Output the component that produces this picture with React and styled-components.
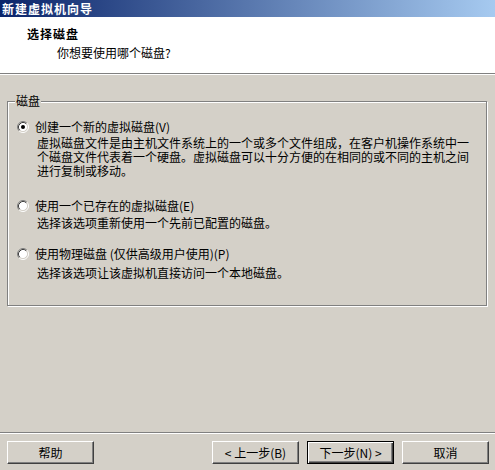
import React from "react";
import styled, { createGlobalStyle } from "styled-components";

const Global = createGlobalStyle`
  html, body { margin: 0; padding: 0; background: #d4d0c8; }
  body { font-family: "Noto Sans CJK SC", "Liberation Sans", sans-serif; font-size: 12px; color: #000; }
`;

const Window = styled.div`
  width: 495px;
  height: 470px;
  display: flex;
  flex-direction: column;
  background: #d4d0c8;
  overflow: hidden;
`;

const TitleBar = styled.div`
  height: 17px;
  flex: none;
  display: flex;
  align-items: center;
  padding-left: 2px;
  background: linear-gradient(to right, #0a246a, #a6caf0);
  color: #fff;
  font-weight: bold;
  font-size: 12px;
  line-height: 17px;
  letter-spacing: 1px;
`;

const Header = styled.div`
  height: 56px;
  flex: none;
  background: #fff;
  box-sizing: border-box;
  padding-top: 10px;
  display: flex;
  flex-direction: column;
`;

const HeaderTitle = styled.div`
  font-weight: bold;
  line-height: 13px;
  padding-left: 27px;
  letter-spacing: 1px;
`;

const HeaderSub = styled.div`
  line-height: 13px;
  margin-top: 6px;
  padding-left: 57px;
`;

const Separator = styled.div`
  flex: none;
  height: 0;
  border-top: 1px solid #808080;
  border-bottom: 1px solid #fff;
`;

const Body = styled.div`
  flex: 1;
  padding: 26px 8px 0 7px;
`;

const Group = styled.div`
  position: relative;
  height: 205px;
  box-sizing: border-box;
  border: 1px solid #808080;
  box-shadow: inset 1px 1px 0 #fff, 1px 1px 0 #fff;
  padding: 18px 0 0 9px;
`;

const Legend = styled.span`
  position: absolute;
  top: -8px;
  left: 7px;
  padding: 0 1px;
  background: #d4d0c8;
  line-height: 14px;
`;

const Option = styled.div`
  margin-top: ${(p) => p.$gap}px;
`;

const RadioRow = styled.label`
  display: flex;
  align-items: center;
  gap: 6px;
  line-height: 14px;
  white-space: nowrap;
`;

const Desc = styled.div`
  padding-left: 20px;
  margin-top: ${(p) => p.$gap}px;
  line-height: 14px;
  white-space: nowrap;
`;

const Footer = styled.div`
  flex: none;
  border-top: 1px solid #808080;
  box-shadow: inset 0 1px 0 #fff;
  padding: 8px 6px 6px 7px;
  display: flex;
  align-items: center;
`;

const Spacer = styled.div`
  flex: 1;
`;

const Button = styled.button`
  width: ${(p) => p.$w || 87}px;
  height: 23px;
  margin-left: ${(p) => p.$ml || 0}px;
  box-sizing: border-box;
  background: #d4d0c8;
  font-family: "Noto Sans CJK SC", "Liberation Sans", sans-serif;
  font-size: 12px;
  color: #000;
  padding: 0;
  line-height: 14px;
  border: 1px solid;
  border-color: ${(p) => (p.$default ? "#000" : "#fff #404040 #404040 #fff")};
  box-shadow: ${(p) =>
    p.$default
      ? "inset 1px 1px 0 #fff, inset -1px -1px 0 #404040, inset -2px -2px 0 #808080"
      : "inset -1px -1px 0 #808080"};
  border-radius: 0;
`;

function Radio({ checked }) {
  return (
    <svg width="12" height="12" viewBox="0 0 12 12" style={{ flex: "none" }}>
      <circle cx="6" cy="6" r="4.5" fill="#fff" />
      <path d="M2.11 9.89 A5.5 5.5 0 0 1 9.89 2.11" stroke="#808080" fill="none" strokeWidth="1" />
      <path d="M9.89 2.11 A5.5 5.5 0 0 1 2.11 9.89" stroke="#fff" fill="none" strokeWidth="1" />
      <path d="M2.82 9.18 A4.5 4.5 0 0 1 9.18 2.82" stroke="#404040" fill="none" strokeWidth="1" />
      <path d="M9.18 2.82 A4.5 4.5 0 0 1 2.82 9.18" stroke="#d4d0c8" fill="none" strokeWidth="1" />
      {checked && <circle cx="6" cy="6" r="2" fill="#000" />}
    </svg>
  );
}

const options = [
  {
    label: "创建一个新的虚拟磁盘(V)",
    checked: true,
    gap: 0,
    descGap: 2,
    lines: [
      "虚拟磁盘文件是由主机文件系统上的一个或多个文件组成，在客户机操作系统中一",
      "个磁盘文件代表着一个硬盘。虚拟磁盘可以十分方便的在相同的或不同的主机之间",
      "进行复制或移动。",
    ],
  },
  {
    label: "使用一个已存在的虚拟磁盘(E)",
    gap: 21,
    descGap: 3,
    lines: ["选择该选项重新使用一个先前已配置的磁盘。"],
  },
  {
    label: "使用物理磁盘 (仅供高级用户使用)(P)",
    gap: 17,
    descGap: 5,
    lines: ["选择该选项让该虚拟机直接访问一个本地磁盘。"],
  },
];

export default function App() {
  return (
    <Window>
      <Global />
      <TitleBar>新建虚拟机向导</TitleBar>
      <Header>
        <HeaderTitle>选择磁盘</HeaderTitle>
        <HeaderSub>你想要使用哪个磁盘?</HeaderSub>
      </Header>
      <Separator />
      <Body>
        <Group>
          <Legend>磁盘</Legend>
          {options.map((o) => (
            <Option key={o.label} $gap={o.gap}>
              <RadioRow>
                <Radio checked={o.checked} />
                {o.label}
              </RadioRow>
              <Desc $gap={o.descGap}>
                {o.lines.map((l) => (
                  <div key={l}>{l}</div>
                ))}
              </Desc>
            </Option>
          ))}
        </Group>
      </Body>
      <Footer>
        <Button>帮助</Button>
        <Spacer />
        <Button>&lt; 上一步(B)</Button>
        <Button $ml={8} $default>下一步(N) &gt;</Button>
        <Button $ml={8}>取消</Button>
      </Footer>
    </Window>
  );
}
